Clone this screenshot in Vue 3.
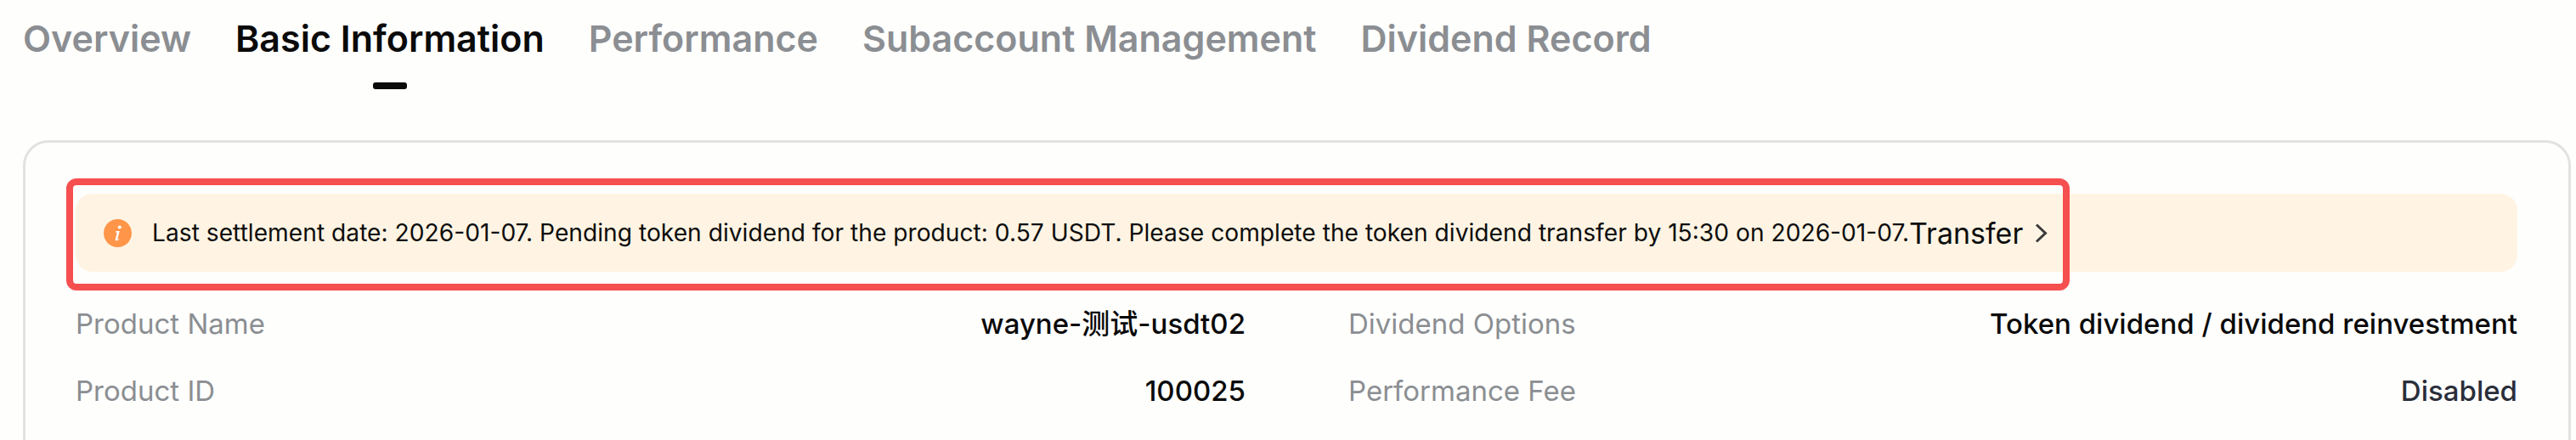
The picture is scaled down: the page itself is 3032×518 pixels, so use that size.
<script setup>
const tabs = ['Overview', 'Basic Information', 'Performance', 'Subaccount Management', 'Dividend Record'];
const active = 'Basic Information';

const rows = [
  { label: 'Product Name', value: 'wayne-测试-usdt02' },
  { label: 'Dividend Options', value: 'Token dividend / dividend reinvestment' },
  { label: 'Product ID', value: '100025' },
  { label: 'Performance Fee', value: 'Disabled', muted: true },
];
</script>

<template>
  <div class="page">
    <div class="tabs">
      <div v-for="tab in tabs" :key="tab" class="tab" :class="{ active: tab === active }">{{ tab }}</div>
    </div>

    <div class="card">
      <div class="notice">
        <svg class="notice-icon" viewBox="0 0 33 33" width="33" height="33">
          <circle cx="16.5" cy="16.5" r="16.5" fill="#ff9549" />
          <circle cx="18.8" cy="9.4" r="2" fill="#fff" />
          <path d="M14.6 14h4.2l-2.4 9.2c-.2.8.6.9 1.8 0l.3.6c-1.7 1.6-5.2 2.4-4.8.1l2-7.9h-1.4z" fill="#fff" />
        </svg>
        <span class="notice-text">Last settlement date: 2026-01-07. Pending token dividend for the product: 0.57 USDT. Please complete the token dividend transfer by 15:30 on 2026-01-07.</span>
        <span class="notice-link">Transfer</span>
        <svg class="notice-arrow" viewBox="0 0 15 23" width="15" height="23">
          <path d="M2 1.5l10.5 10-10.5 10" fill="none" stroke="#3a3a3a" stroke-width="3" />
        </svg>
      </div>

      <div class="info">
        <div v-for="item in rows" :key="item.label" class="info-item">
          <span class="info-label">{{ item.label }}</span>
          <span class="info-value" :class="{ muted: item.muted }">{{ item.value }}</span>
        </div>
      </div>

      <!-- annotation box drawn over the screenshot -->
      <div class="highlight"></div>
    </div>
  </div>
</template>

<style>
html,
body {
  background: #fefefd;
}
</style>

<style scoped>
.page {
  width: 3032px;
  height: 518px;
  overflow: hidden;
  padding: 0 6px 0 27px;
  box-sizing: border-box;
  font-family: Inter, "Noto Sans CJK SC", sans-serif;
}

.tabs {
  display: flex;
  gap: 52px;
  height: 165px;
  padding-top: 19px;
  box-sizing: border-box;
}

.tab {
  position: relative;
  font-size: 43px;
  line-height: 52px;
  font-weight: 600;
  color: #8b8e92;
  white-space: nowrap;
}

.tab.active {
  color: #0a0a0a;
}

.tab.active::after {
  content: "";
  position: absolute;
  left: 50%;
  top: 78px;
  width: 40px;
  height: 8px;
  margin-left: -20px;
  border-radius: 3px;
  background: #0a0a0a;
}

.card {
  position: relative;
  height: 400px;
  padding: 60px 60px 0 59px;
  border: 3px solid #e2e2e2;
  border-radius: 30px;
  box-sizing: border-box;
}

.notice {
  display: flex;
  align-items: center;
  height: 92px;
  padding-left: 33px;
  border-radius: 20px;
  background: #fff4e3;
  color: #0d0d0d;
}

.notice-icon {
  flex: none;
  margin-right: 24px;
}

.notice-text {
  font-size: 28.2px;
  white-space: nowrap;
}

.notice-link {
  font-size: 34px;
}

.notice-arrow {
  margin-left: 14px;
}

.info {
  display: grid;
  grid-template-columns: 1377px 1376px;
  column-gap: 121px;
  row-gap: 39px;
  margin-top: 41px;
}

.info-item {
  display: flex;
  justify-content: space-between;
  font-size: 33px;
  line-height: 40px;
}

.info-label {
  color: #8b8e92;
}

.info-value {
  color: #0a0a0a;
  font-weight: 500;
}

.info-value.muted {
  color: #2a2e3a;
}

.highlight {
  position: absolute;
  left: 48px;
  top: 42px;
  width: 2358px;
  height: 132px;
  border: 8px solid #f54f4f;
  border-radius: 12px;
  box-sizing: border-box;
  pointer-events: none;
}
</style>
